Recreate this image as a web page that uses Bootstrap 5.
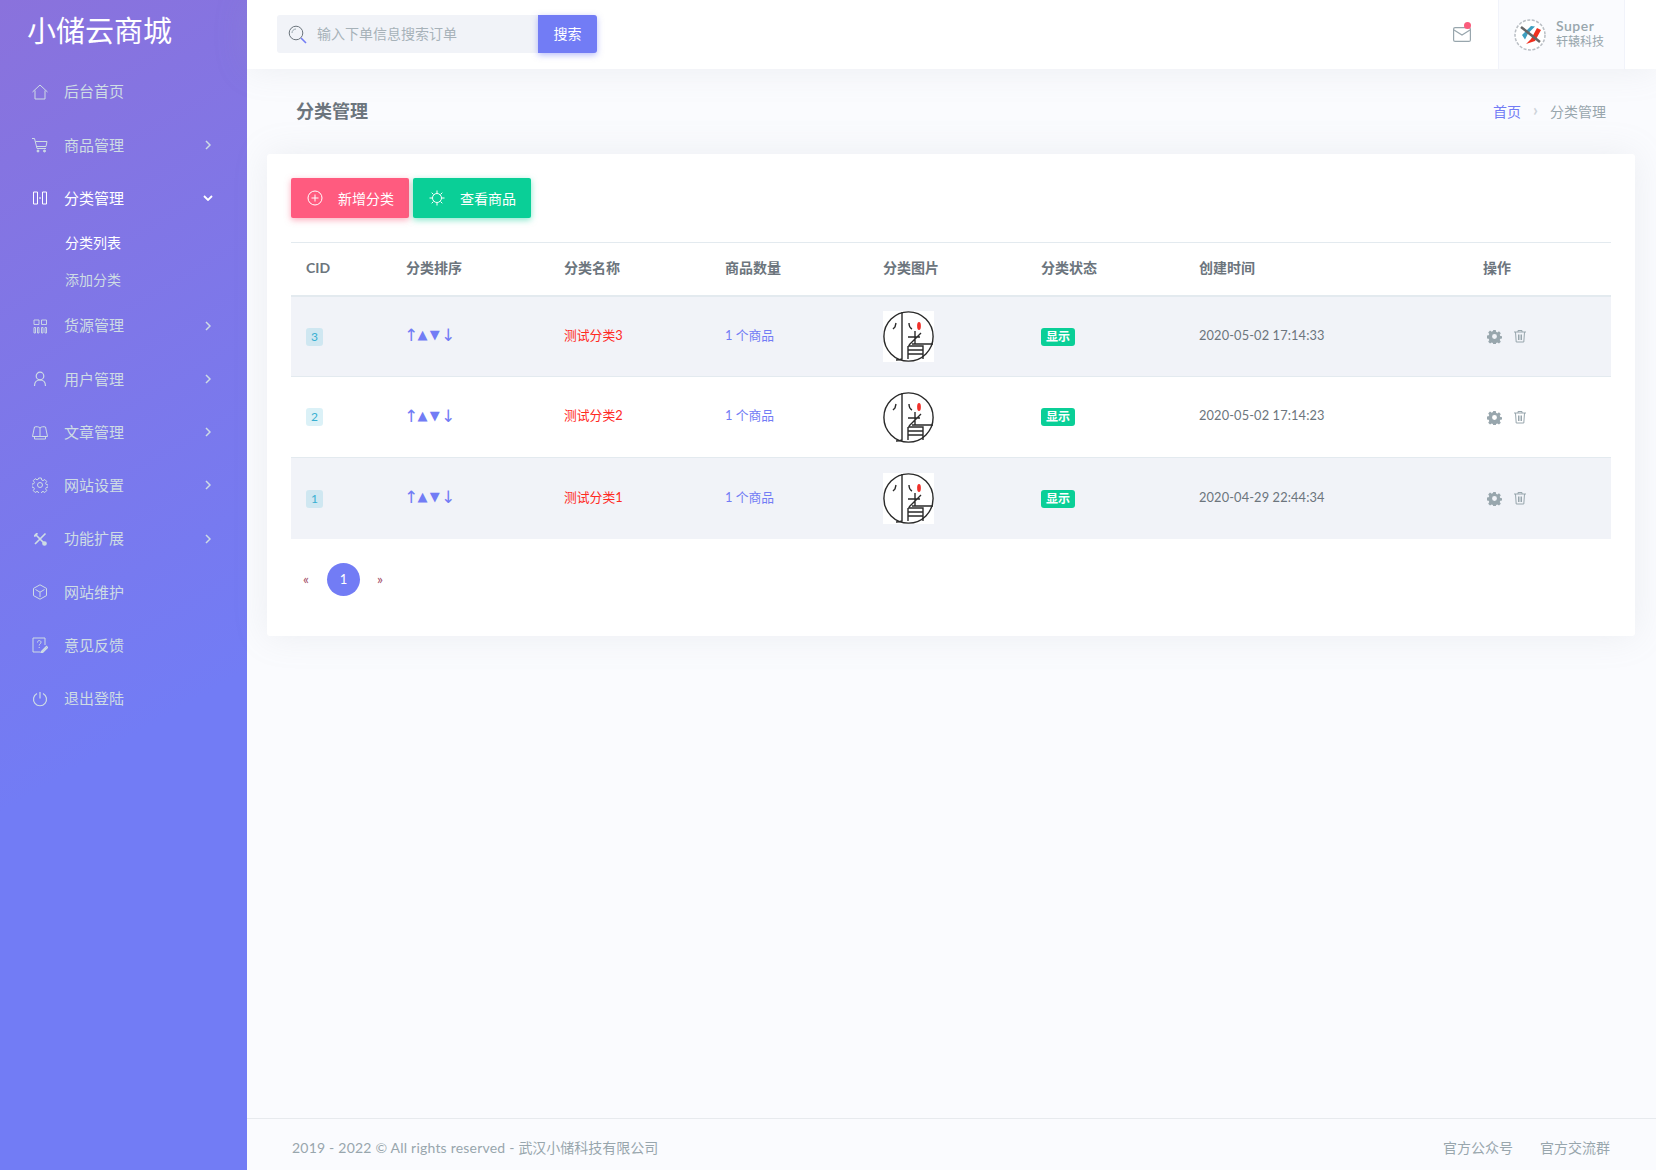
<!DOCTYPE html>
<html lang="zh-CN">
<head>
  <meta charset="UTF-8">
  <title>分类管理</title>
  <link rel="stylesheet" href="https://cdn.jsdelivr.net/npm/bootstrap@5.3.0/dist/css/bootstrap.min.css">
  <style>
    html, body { height: 100%; }
    body {
      font-family: Lato, "Noto Sans CJK SC", sans-serif;
      font-size: 14px;
      color: #6c757d;
      background: #fafbfe;
    }
    a { text-decoration: none; }
    svg { display: block; flex: none; }
    .app-shell { min-height: 1170px; }

    .side-bar {
      width: 247px;
      flex: none;
      background: linear-gradient(150deg, #8a72dc 0%, #727cf5 62%);
    }
    .brand-name { height: 65px; padding-left: 27px; font-size: 29px; line-height: 62px; color: #fff; }
    .side-link {
      height: 53.3px;
      padding: 0 36px 0 32px;
      font-size: 15px;
      color: #cedce4;
    }
    .side-link .side-ico { width: 16px; height: 16px; margin-right: 16px; }
    .side-link .side-arrow { width: 6px; height: 10px; margin-left: auto; }
    .side-link.is-open { color: #fff; }
    .side-link.is-open .side-arrow { width: 10px; height: 6px; margin-right: -2px; }
    .side-sub a { display: block; height: 37px; line-height: 35px; padding-left: 65px; font-size: 14px; color: #cedce4; }
    .side-sub a.is-on { color: #fff; }

    .top-bar { height: 69px; padding-left: 30px; background: #fff; box-shadow: 0 0 35px rgba(154, 161, 171, .15); position: relative; }
    .search-box { width: 320px; height: 38px; margin-bottom: 1px; background: #f1f3f8; border-radius: 3px; }
    .search-box svg { margin: 0 10px 0 11px; }
    .search-box input { flex: 1; min-width: 0; height: 36px; align-self: flex-start; border: 0; outline: 0; background: none; padding: 0; font-size: 14px; color: #98a6ad; }
    .search-box input::placeholder { color: #a7b2b9; opacity: 1; }
    .search-btn {
      width: 59px; height: 38px; padding: 0 0 2px; border: 0; border-radius: 0 3px 3px 0; font-size: 14px;
      color: #fff; background: #727cf5; box-shadow: 0 2px 6px 0 rgba(114, 124, 245, .5);
    }
    .mail-btn { position: relative; margin-right: 27px; }
    .mail-dot { position: absolute; top: -5px; right: 0; width: 7px; height: 7px; border-radius: 50%; background: #fa5c7c; }
    .user-box {
      width: 127px; height: 69px; margin-right: 31px; padding-left: 15px;
      background: #fafbfe; border-left: 1px solid #f1f3fa; border-right: 1px solid #f1f3fa; color: #98a6ad;
    }
    .user-box svg { margin-right: 10px; }
    .user-text { margin-top: -3px; }
    .user-nick { font-size: 14px; line-height: 16px; font-weight: 600; letter-spacing: .5px; }
    .user-org { font-size: 12px; line-height: 15px; }

    .page-head { height: 85px; padding: 0 29px; }
    .page-title { margin: 0; font-size: 18px; font-weight: 700; color: #6c757d; }
    .crumb-list { margin: 0; font-size: 14px; --bs-breadcrumb-divider: "›"; }
    .crumb-list .breadcrumb-item a { color: #727cf5; }
    .crumb-list .breadcrumb-item.active { color: #98a6ad; }
    .crumb-list .breadcrumb-item + .breadcrumb-item { padding-left: 12px; }
    .crumb-list .breadcrumb-item + .breadcrumb-item::before { padding-right: 12px; color: #ced4da; font-size: 17px; font-weight: 700; line-height: 18px; }

    .main-wrap { padding: 0 21px 0 20px; }
    .box-card {
      padding: 24px 24px 40px;
      border: 0;
      border-radius: 3px;
      box-shadow: 0 0 35px rgba(154, 161, 171, .15);
    }
    .act-btn {
      width: 118px; height: 40px; padding: 0 14px 0 16px; border: 0; border-radius: 2px;
      font-size: 14px; color: #fff;
    }
    .act-btn:hover { color: #fff; }
    .act-btn svg { margin-right: 15px; }
    .act-pink { background: #ff5b7f; box-shadow: 0 2px 6px 0 rgba(250, 92, 124, .5); }
    .act-pink:hover { background: #ff5b7f; }
    .act-green { background: #0acf97; box-shadow: 0 2px 6px 0 rgba(10, 207, 151, .5); }
    .act-green:hover { background: #0acf97; }

    .cat-table { table-layout: fixed; margin: 24px 0; font-size: 12.8px; color: #6c757d; --bs-table-striped-bg: #f1f3f8; --bs-table-striped-color: #6c757d; --bs-table-color: #6c757d; }
    .cat-table th, .cat-table td { padding: 0 15px; vertical-align: middle; border-color: #e3eaef; }
    .cat-table thead th { height: 53px; padding-bottom: 2px; font-size: 14px; font-weight: 700; color: #6c757d; border-top: 1px solid #e3eaef; border-bottom: 2px solid #e3eaef; }
    .cat-table tbody td { height: 81px; border-top: 0; }
    .cat-table tbody td.text-cell { padding-bottom: 2px; }
    .cat-table > tbody > tr:last-child > td { border-bottom: 0; }
    .cat-table > :not(caption) > * > * { box-shadow: none; }
    .cat-table > tbody > tr:nth-of-type(odd) > * { background: #f1f3f8; }
    .col-cid { width: 100px; }
    .col-sort { width: 158px; }
    .col-name { width: 161px; }
    .col-wide { width: 284px; }
    .col-std { width: 158px; }
    .col-ops { width: 143px; }
    .cid-tag { background: rgba(57, 175, 209, .18); color: #39afd1; font-size: 12px; font-weight: 400; padding: 3px 5px; border-radius: 3px; line-height: 12px; }
    .sort-links { margin-left: -2px; font-family: "DejaVu Sans", sans-serif; font-size: 13px; line-height: 16px; }
    .sort-links a { width: 12.3px; text-align: center; color: #727cf5; }
    .sort-links a:first-child, .sort-links a:last-child { font-size: 17px; }
    .cat-name { color: #ff2a1f; }
    .goods-link { color: #727cf5; }
    .time-cell { letter-spacing: .13px; }
    .show-tag { background: #0acf97; color: #fff; font-size: 12px; font-weight: 700; padding: 2px 5px; border-radius: 3px; line-height: 14px; }
    .cat-logo { background: #fff; }
    .op-icons { color: #98a6ad; gap: 11px; }

    .page-dots { margin: 0; }
    .page-dots .page-link { border: 0; background: none; padding: 0; font-size: 14px; color: #a34c66; }
    .page-dots .page-step { width: 30px; height: 33px; padding-bottom: 2px; display: flex; align-items: center; justify-content: center; }
    .page-dots .page-item.active .page-link {
      width: 33px; height: 33px; margin: 0 6px; border-radius: 50%; line-height: 33px; text-align: center;
      background: #727cf5; color: #fff; font-size: 13px;
    }

    .foot-bar {
      height: 52px; margin-top: auto; padding: 6px 46px 0 45px;
      border-top: 1px solid #e7eaee; color: #98a6ad; font-size: 14px;
    }
    .foot-bar a { color: #98a6ad; margin-left: 27px; }
    .foot-latin { letter-spacing: .21px; }
  </style>
</head>
<body>
  <svg width="0" height="0" class="position-absolute">
    <defs>
      <symbol id="ic-right" viewBox="0 0 6 10"><path d="M1 1l4 4-4 4" fill="none" stroke="currentColor" stroke-width="1.5"/></symbol>
      <symbol id="ic-gear" viewBox="0 0 16 16"><path fill="currentColor" fill-rule="evenodd" d="M6.700 1h2.600l.4 2 1.300.6 1.800-1.100 1.900 1.900-1.100 1.800.6 1.300 2 .4v2.200l-2 .4-.6 1.300 1.100 1.800-1.900 1.900-1.800-1.100-1.300.6-.4 2H6.700l-.4-2-1.300-.6-1.800 1.100-1.900-1.900 1.100-1.800-.6-1.300-2-.4V7.100l2-.4.6-1.300-1.100-1.800 1.900-1.900 1.800 1.100 1.300-.6zM8 5.400a2.600 2.600 0 1 0 0 5.200 2.600 2.600 0 0 0 0-5.200z"/></symbol>
      <symbol id="ic-trash" viewBox="0 0 14 14"><path fill="none" stroke="currentColor" d="M1 3h12M5 3V1.500h4V3M2.500 3l.7 10h7.600l.7-10M5.500 5.500v5.500M7 5.500v5.500M8.500 5.500v5.500"/></symbol>
      <symbol id="cat-logo" viewBox="0 0 51 51">
        <rect width="51" height="51" fill="#fff"/>
        <g fill="none" stroke="#2a2a2a" stroke-width="1.400">
          <circle cx="25.500" cy="25.500" r="24.600"/>
          <path d="M19 1v47c-2 1-4 1-6 1M13 12l-1 4-2 2M26 12c0 3 1 5 3 6M29 33h21M25 26h12M32 20v13M38 22l-12 12M25 35h15v13M25 35v13M25 39h15M25 43h15"/>
        </g>
        <ellipse cx="36" cy="15" rx="1.900" ry="4" fill="#f0302a"/>
      </symbol>
    </defs>
  </svg>

  <div class="app-shell d-flex">
    <aside class="side-bar">
      <div class="brand-name">小储云商城</div>
      <ul class="list-unstyled m-0">
        <li>
          <a class="side-link d-flex align-items-center" href="#">
            <svg class="side-ico" viewBox="0 0 16 16" fill="none" stroke="currentColor"><path d="M.5 8L8 1l7.500 7M3 6.500V15h10V6.500"/></svg>后台首页
          </a>
        </li>
        <li>
          <a class="side-link d-flex align-items-center" href="#">
            <svg class="side-ico" viewBox="0 0 16 16" fill="none" stroke="currentColor"><path d="M0 1.500h2.500l2.500 10h9M3.500 4.500H15l-1 5H4.800"/><circle cx="6" cy="14" r="1" fill="currentColor"/><circle cx="12.500" cy="14" r="1" fill="currentColor"/></svg>商品管理
            <svg class="side-arrow"><use href="#ic-right"/></svg>
          </a>
        </li>
        <li>
          <a class="side-link is-open d-flex align-items-center" href="#">
            <svg class="side-ico" viewBox="0 0 16 16" fill="none" stroke="currentColor"><path d="M1.500 2h4v12h-4zM10.500 2h4v12h-4zM7 8h2"/></svg>分类管理
            <svg class="side-arrow" viewBox="0 0 10 6"><path d="M1 1l4 4 4-4" fill="none" stroke="currentColor" stroke-width="1.800"/></svg>
          </a>
          <div class="side-sub">
            <a class="is-on" href="#">分类列表</a>
            <a href="#">添加分类</a>
          </div>
        </li>
        <li>
          <a class="side-link d-flex align-items-center" href="#">
            <svg class="side-ico" viewBox="0 0 16 16" fill="none" stroke="currentColor" stroke-width=".9"><path d="M2 2h5v4.500H2zM9.500 2h5v4.500h-5zM2 9.500h1.500V15H2zM5.500 9.500H7V15H5.500zM9.500 9.500H11V15H9.500zM13 9.500h1.500V15H13z"/></svg>货源管理
            <svg class="side-arrow"><use href="#ic-right"/></svg>
          </a>
        </li>
        <li>
          <a class="side-link d-flex align-items-center" href="#">
            <svg class="side-ico" viewBox="0 0 16 16" fill="none" stroke="currentColor" stroke-width="1.200"><circle cx="8" cy="5" r="3.800"/><path d="M2.500 15c0-3.500 2-6 5.500-6s5.500 2.500 5.500 6"/></svg>用户管理
            <svg class="side-arrow"><use href="#ic-right"/></svg>
          </a>
        </li>
        <li>
          <a class="side-link d-flex align-items-center" href="#">
            <svg class="side-ico" viewBox="0 0 16 16" fill="none" stroke="currentColor"><path d="M8 4C6.500 2.500 4.500 2.500 2.500 3L.5 12.500h15L13.500 3C11.500 2.500 9.500 2.500 8 4zM8 4v8.500M2.500 12.500V15h11v-2.500"/></svg>文章管理
            <svg class="side-arrow"><use href="#ic-right"/></svg>
          </a>
        </li>
        <li>
          <a class="side-link d-flex align-items-center" href="#">
            <svg class="side-ico" viewBox="0 0 16 16" fill="none" stroke="currentColor"><circle cx="8" cy="8" r="2.500"/><path d="M6.700 1h2.600l.4 2 1.300.6 1.800-1.100 1.900 1.900-1.100 1.800.6 1.300 2 .4v2.200l-2 .4-.6 1.300 1.100 1.800-1.900 1.900-1.800-1.100-1.300.6-.4 2H6.700l-.4-2-1.300-.6-1.800 1.100-1.900-1.900 1.100-1.800-.6-1.300-2-.4V7.100l2-.4.6-1.300-1.100-1.800 1.900-1.900 1.800 1.100 1.300-.6z"/></svg>网站设置
            <svg class="side-arrow"><use href="#ic-right"/></svg>
          </a>
        </li>
        <li>
          <a class="side-link d-flex align-items-center" href="#">
            <svg class="side-ico" viewBox="0 0 16 16" fill="none" stroke="currentColor" stroke-width="1.700"><path d="M3 3l10 10M13.500 2.500L3 13M2 5c1 0 3-1 3-3"/><circle cx="12.500" cy="12.500" r="1.500" fill="currentColor"/></svg>功能扩展
            <svg class="side-arrow"><use href="#ic-right"/></svg>
          </a>
        </li>
        <li>
          <a class="side-link d-flex align-items-center" href="#">
            <svg class="side-ico" viewBox="0 0 16 16" fill="none" stroke="currentColor"><path d="M8 .8l6.500 3.600v7.200L8 15.200l-6.500-3.600V4.400zM3.500 5.500L8 8.200l4.500-2.700M8 8.200V13"/></svg>网站维护
          </a>
        </li>
        <li>
          <a class="side-link d-flex align-items-center" href="#">
            <svg class="side-ico" viewBox="0 0 16 16" fill="none" stroke="currentColor"><path d="M13 8V1H1v14h7"/><path d="M5.500 5.500C5.500 3 9 3 9 5.200 9 6.800 7.200 7 7.200 8.500M7.200 10v1"/><path d="M9.500 14.500l5-5 1 1-5 5-1.500.3z" stroke-width="1.400"/></svg>意见反馈
          </a>
        </li>
        <li>
          <a class="side-link d-flex align-items-center" href="#">
            <svg class="side-ico" viewBox="0 0 16 16" fill="none" stroke="currentColor" stroke-width="1.200"><path d="M5 2.500a6.500 6.500 0 1 0 6 0M8 1v6.500"/></svg>退出登陆
          </a>
        </li>
      </ul>
    </aside>

    <div class="flex-grow-1 d-flex flex-column min-w-0">
      <header class="top-bar d-flex align-items-center">
        <form class="search-box d-flex align-items-center">
          <svg width="19" height="19" viewBox="0 0 19 19" fill="none" stroke="#6c757d"><circle cx="8" cy="8" r="6.800"/><path d="M4 8c0-2 1.500-4 4-4" stroke="#98a6ad"/><path d="M13 13l5 5" stroke="#727cf5" stroke-width="1.600"/></svg>
          <input type="text" placeholder="输入下单信息搜索订单">
          <button type="button" class="search-btn">搜索</button>
        </form>
        <a class="mail-btn ms-auto" href="#">
          <svg width="18" height="15" viewBox="0 0 18 15" fill="none" stroke="#98a6ad" stroke-width="1.200"><rect x=".6" y=".6" width="16.800" height="13.800" rx="1.500"/><path d="M1 3l8 5 8-5"/></svg>
          <span class="mail-dot"></span>
        </a>
        <div class="user-box d-flex align-items-center">
          <svg width="32" height="32" viewBox="0 0 32 32">
            <circle cx="16" cy="16" r="15" fill="#fff" stroke="#b9bec4" stroke-width="1.500" stroke-dasharray="3 1.500"/>
            <path d="M23 9l4 2-6 11-9 3 5-5z" fill="#f0301e"/>
            <path d="M8 16l9-9 4 .5-7 7-3 6z" fill="#3d9fc0"/>
            <path d="M7 8l19 15" stroke="#666" stroke-width="2.500"/>
          </svg>
          <div class="user-text">
            <div class="user-nick">Super</div>
            <div class="user-org">轩辕科技</div>
          </div>
        </div>
      </header>

      <div class="main-wrap">
        <div class="page-head d-flex align-items-center justify-content-between">
          <h4 class="page-title">分类管理</h4>
          <ol class="breadcrumb crumb-list">
            <li class="breadcrumb-item"><a href="#">首页</a></li>
            <li class="breadcrumb-item active">分类管理</li>
          </ol>
        </div>

        <div class="card box-card">
          <div class="d-flex gap-1">
            <a class="btn act-btn act-pink d-flex align-items-center" href="#">
              <svg width="16" height="16" viewBox="0 0 16 16" fill="none" stroke="currentColor"><circle cx="8" cy="8" r="7"/><path d="M8 4.500v7M4.500 8h7"/></svg>新增分类
            </a>
            <a class="btn act-btn act-green d-flex align-items-center" href="#">
              <svg width="16" height="16" viewBox="0 0 16 16" fill="none" stroke="currentColor"><circle cx="8" cy="8" r="4.500"/><path d="M8 .5v2.500M8 13v2.500M.5 8H3M13 8h2.500M2.700 2.700l1.800 1.800M11.500 11.500l1.800 1.800M2.700 13.300l1.800-1.800M11.500 4.500l1.800-1.800"/></svg>查看商品
            </a>
          </div>

          <table class="table cat-table">
            <thead>
              <tr>
                <th class="col-cid">CID</th>
                <th class="col-sort">分类排序</th>
                <th class="col-name">分类名称</th>
                <th class="col-std">商品数量</th>
                <th class="col-std">分类图片</th>
                <th class="col-std">分类状态</th>
                <th class="col-wide">创建时间</th>
                <th class="col-ops">操作</th>
              </tr>
            </thead>
            <tbody>
              <tr>
                <td><span class="badge cid-tag">3</span></td>
                <td class="text-cell"><div class="sort-links d-flex align-items-center"><a href="#">↑</a><a href="#">▲</a><a href="#">▼</a><a href="#">↓</a></div></td>
                <td class="cat-name text-cell">测试分类3</td>
                <td class="text-cell"><a class="goods-link" href="#">1 个商品</a></td>
                <td><svg class="cat-logo" width="51" height="51"><use href="#cat-logo"/></svg></td>
                <td><span class="badge show-tag">显示</span></td>
                <td class="time-cell text-cell">2020-05-02 17:14:33</td>
                <td>
                  <div class="op-icons d-flex align-items-center ps-1">
                    <svg width="15" height="15"><use href="#ic-gear"/></svg>
                    <svg width="14" height="14"><use href="#ic-trash"/></svg>
                  </div>
                </td>
              </tr>
              <tr>
                <td><span class="badge cid-tag">2</span></td>
                <td class="text-cell"><div class="sort-links d-flex align-items-center"><a href="#">↑</a><a href="#">▲</a><a href="#">▼</a><a href="#">↓</a></div></td>
                <td class="cat-name text-cell">测试分类2</td>
                <td class="text-cell"><a class="goods-link" href="#">1 个商品</a></td>
                <td><svg class="cat-logo" width="51" height="51"><use href="#cat-logo"/></svg></td>
                <td><span class="badge show-tag">显示</span></td>
                <td class="time-cell text-cell">2020-05-02 17:14:23</td>
                <td>
                  <div class="op-icons d-flex align-items-center ps-1">
                    <svg width="15" height="15"><use href="#ic-gear"/></svg>
                    <svg width="14" height="14"><use href="#ic-trash"/></svg>
                  </div>
                </td>
              </tr>
              <tr>
                <td><span class="badge cid-tag">1</span></td>
                <td class="text-cell"><div class="sort-links d-flex align-items-center"><a href="#">↑</a><a href="#">▲</a><a href="#">▼</a><a href="#">↓</a></div></td>
                <td class="cat-name text-cell">测试分类1</td>
                <td class="text-cell"><a class="goods-link" href="#">1 个商品</a></td>
                <td><svg class="cat-logo" width="51" height="51"><use href="#cat-logo"/></svg></td>
                <td><span class="badge show-tag">显示</span></td>
                <td class="time-cell text-cell">2020-04-29 22:44:34</td>
                <td>
                  <div class="op-icons d-flex align-items-center ps-1">
                    <svg width="15" height="15"><use href="#ic-gear"/></svg>
                    <svg width="14" height="14"><use href="#ic-trash"/></svg>
                  </div>
                </td>
              </tr>
            </tbody>
          </table>

          <ul class="pagination page-dots">
            <li class="page-item"><a class="page-link page-step" href="#">«</a></li>
            <li class="page-item active"><a class="page-link" href="#">1</a></li>
            <li class="page-item"><a class="page-link page-step" href="#">»</a></li>
          </ul>
        </div>
      </div>

      <footer class="foot-bar d-flex align-items-center justify-content-between">
        <div><span class="foot-latin">2019 - 2022 © All rights reserved - </span>武汉小储科技有限公司</div>
        <div class="d-flex">
          <a href="#">官方公众号</a>
          <a href="#">官方交流群</a>
        </div>
      </footer>
    </div>
  </div>
</body>
</html>
